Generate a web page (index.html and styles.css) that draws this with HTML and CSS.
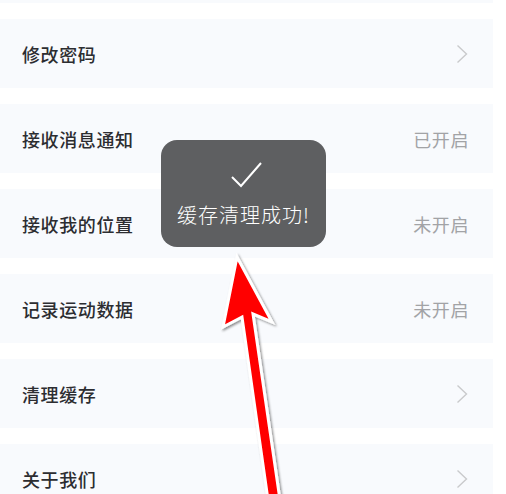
FILE: index.html
```html
<!DOCTYPE html>
<html lang="zh">
<head>
<meta charset="utf-8">
<link rel="stylesheet" href="styles.css">
</head>
<body>
<div class="screen">
  <div class="list">
    <div class="row-tail"></div>
    <div class="row"><span class="label">修改密码</span><svg class="chev" viewBox="0 0 12 20" width="12" height="20"><path d="M1.5 1.5 L10.5 10 L1.5 18.5" fill="none" stroke="#c9cacc" stroke-width="1.4"/></svg></div>
    <div class="row"><span class="label">接收消息通知</span><span class="value">已开启</span></div>
    <div class="row"><span class="label">接收我的位置</span><span class="value">未开启</span></div>
    <div class="row"><span class="label">记录运动数据</span><span class="value">未开启</span></div>
    <div class="row"><span class="label">清理缓存</span><svg class="chev" viewBox="0 0 12 20" width="12" height="20"><path d="M1.5 1.5 L10.5 10 L1.5 18.5" fill="none" stroke="#c9cacc" stroke-width="1.4"/></svg></div>
    <div class="row"><span class="label">关于我们</span><svg class="chev" viewBox="0 0 12 20" width="12" height="20"><path d="M1.5 1.5 L10.5 10 L1.5 18.5" fill="none" stroke="#c9cacc" stroke-width="1.4"/></svg></div>
  </div>

  <div class="toast">
    <svg class="check" viewBox="0 0 40 30" width="40" height="30"><path d="M6 18 L15 27 L35 4" fill="none" stroke="#ffffff" stroke-width="2"/></svg>
    <div class="toast-text">缓存清理成功!</div>
  </div>

  <svg class="arrow" viewBox="0 0 506 494" width="506" height="494">
    <defs>
      <filter id="sh" x="-20%" y="-20%" width="140%" height="140%">
        <feDropShadow dx="1.5" dy="1.5" stdDeviation="1.2" flood-color="#000" flood-opacity="0.45"/>
      </filter>
    </defs>
    <path d="M237 257 L272 322 L253 314 L280 500 L268 500 L242 317 L223 327 Z" fill="#ff0000" stroke="#ffffff" stroke-width="3" stroke-linejoin="miter" filter="url(#sh)"/>
  </svg>
</div>
</body>
</html>
```

FILE: styles.css
```css
html, body {
  margin: 0;
  padding: 0;
  background: #ffffff;
}
.screen {
  position: relative;
  width: 506px;
  height: 494px;
  overflow: hidden;
  font-family: "Noto Sans CJK SC", "Noto Sans", sans-serif;
}
.list {
  width: 493px;
  display: flex;
  flex-direction: column;
  gap: 16px;
}
.row-tail {
  height: 3px;
  background: #f8fafd;
}
.row {
  height: 69px;
  flex: none;
  background: #f8fafd;
  display: flex;
  align-items: center;
  justify-content: space-between;
  padding: 0 25px 0 22px;
  box-sizing: border-box;
}
.label {
  font-size: 18px;
  font-weight: 500;
  color: #2c2d31;
  letter-spacing: 0.6px;
}
.value {
  font-size: 18px;
  color: #a2a3a6;
  letter-spacing: 0.6px;
  margin-right: -1px;
}
.chev {
  display: block;
}
.toast {
  position: absolute;
  left: 161px;
  top: 140px;
  width: 165px;
  height: 107px;
  background: #5e5f61;
  border-radius: 16px;
  display: flex;
  flex-direction: column;
  align-items: center;
}
.check {
  display: block;
  margin-top: 19px;
  margin-left: 4px;
}
.toast-text {
  margin-top: 14px;
  font-size: 20px;
  font-weight: 300;
  color: #ffffff;
  letter-spacing: 1px;
  line-height: 1.2;
}
.arrow {
  position: absolute;
  left: 0;
  top: 0;
}
```
